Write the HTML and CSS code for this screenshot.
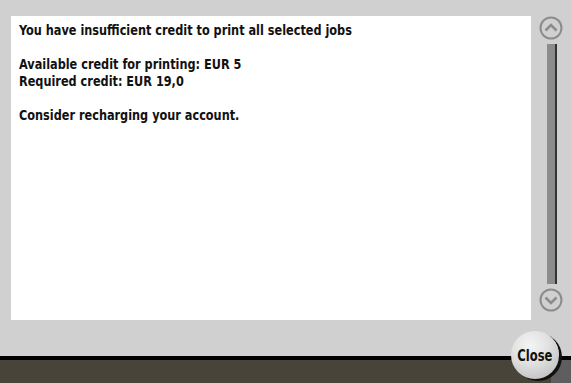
FILE: index.html
```html
<!DOCTYPE html>
<html lang="en">
<head>
    <meta charset="UTF-8">
    <title>Insufficient credit</title>
    <link rel="stylesheet" href="styles.css">
</head>
<body>
    <div class="screen">
        <div class="message">
            <div class="text">
                <p>You have insufficient credit to print all selected jobs</p>
                <p>Available credit for printing: EUR 5<br>Required credit: EUR 19,0</p>
                <p>Consider recharging your account.</p>
            </div>
        </div>
        <div class="scroll">
            <svg class="arrow" width="24" height="24" viewBox="0 0 24 24">
                <circle cx="12" cy="12" r="10.5" fill="none" stroke="#8c8c8c" stroke-width="2"/>
                <polyline points="6.5,14.5 12,9 17.5,14.5" fill="none" stroke="#8c8c8c" stroke-width="2.6"/>
            </svg>
            <div class="track"></div>
            <svg class="arrow" width="24" height="24" viewBox="0 0 24 24">
                <circle cx="12" cy="12" r="10.5" fill="none" stroke="#8c8c8c" stroke-width="2"/>
                <polyline points="6.5,9.5 12,15 17.5,9.5" fill="none" stroke="#8c8c8c" stroke-width="2.6"/>
            </svg>
        </div>
    </div>
    <div class="bar"><div class="dock"></div></div>
    <button class="close"><span>Close</span></button>
</body>
</html>
```

FILE: styles.css
```css
body {
    margin: 0;
    width: 571px;
    height: 383px;
    overflow: hidden;
    position: relative;
    background: #48443a;
    font-family: "DejaVu Sans Condensed", "Liberation Sans Narrow", "Liberation Sans", sans-serif;
}
.screen {
    height: 340px;
    background: #d0d0d0;
    padding: 16px 0 0 11px;
    display: flex;
    gap: 8px;
}
.message {
    width: 512px;
    height: 298px;
    padding: 6px 0 0 8px;
    background: #ffffff;
    color: #111111;
    font-weight: bold;
    font-size: 14.5px;
    line-height: 17px;
}
.text {
    width: 600px;
    transform: scaleX(0.866);
    transform-origin: 0 0;
}
.text p {
    margin: 0 0 17px 0;
}
.scroll {
    width: 24px;
    display: flex;
    flex-direction: column;
    align-items: center;
    height: 300px;
}
.arrow {
    display: block;
}
.track {
    width: 8px;
    height: 240px;
    margin: 4px 0 4px 2px;
    background: #8c8c8c;
    border-right: 2px solid #333333;
}
.bar {
    height: 23px;
    border-top: 4px solid #000000;
    position: relative;
}
.dock {
    position: absolute;
    right: 0;
    top: 0;
    width: 20px;
    height: 23px;
    background: #5e5e5e;
}
.close {
    position: absolute;
    left: 511px;
    top: 331px;
    width: 48px;
    height: 48px;
    border: none;
    border-radius: 50%;
    padding: 0;
    background: radial-gradient(circle at 40% 30%, #f4f4f4 0%, #e2e2e2 40%, #b4b4b4 100%);
    box-shadow: 3px 2px 0 #111111;
    font-family: inherit;
    font-weight: bold;
    font-size: 16px;
    color: #111111;
}
.close span {
    display: inline-block;
    transform: scaleX(0.8);
}
```
